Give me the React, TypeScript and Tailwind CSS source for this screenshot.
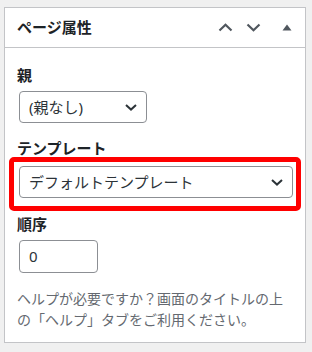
import React from "react";

const font = { fontFamily: '"Noto Sans", "Noto Sans CJK JP", sans-serif' };

function Chevron({ className = "" }: { className?: string }) {
  return (
    <svg width="12" height="7" viewBox="0 0 12 7" className={className}>
      <path d="M1 1 L6 5.6 L11 1" fill="none" stroke="#2c3338" strokeWidth="2" />
    </svg>
  );
}

function Select({ value, width }: { value: string; width: string }) {
  return (
    <div
      className={`${width} ml-[2px] flex h-[32px] items-center justify-between rounded-[4px] border border-[#8c8f94] bg-white pl-[9px] pr-[9px] text-[15px] text-[#2c3338]`}
    >
      <span className="leading-none">{value}</span>
      <Chevron />
    </div>
  );
}

export default function App() {
  return (
    <div className="h-[352px] w-[312px] bg-[#f0f0f0] pl-[4px] pt-[7px]" style={font}>
      <div className="w-[302px] border border-[#c3c4c7] bg-white">
        {/* header */}
        <div className="flex h-[40px] items-center border-b border-[#c3c4c7] pl-[12px]">
          <h2 className="text-[15px] font-bold text-[#1d2327]">ページ属性</h2>
          <div className="ml-auto flex h-full items-center">
            <div className="flex w-[28px] justify-center">
              <svg width="15" height="9" viewBox="0 0 15 9">
                <path d="M1.5 7.5 L7.5 1.8 L13.5 7.5" fill="none" stroke="#50575e" strokeWidth="2.2" />
              </svg>
            </div>
            <div className="flex w-[29px] justify-center">
              <svg width="15" height="9" viewBox="0 0 15 9">
                <path d="M1.5 1.5 L7.5 7.2 L13.5 1.5" fill="none" stroke="#50575e" strokeWidth="2.2" />
              </svg>
            </div>
            <div className="flex w-[37px] justify-center">
              <svg width="10" height="7" viewBox="0 0 10 7">
                <path d="M5 0.5 L9.5 6.5 L0.5 6.5 Z" fill="#50575e" />
              </svg>
            </div>
          </div>
        </div>

        {/* body */}
        <div className="px-[12px] pb-[12px] pt-[17px]">
          <p className="text-[15px] font-semibold leading-[20px] text-[#1d2327]">親</p>
          <div className="mt-[6px]">
            <Select value="(親なし)" width="w-[128px]" />
          </div>

          <p className="mt-[15px] text-[15px] font-semibold leading-[20px] text-[#1d2327]">テンプレート</p>
          <div className="relative mt-[8px]">
            <Select value="デフォルトテンプレート" width="w-[274px]" />
            <div className="pointer-events-none absolute left-[-8px] top-[-9px] h-[54px] w-[292px] rounded-[5px] border-[5px] border-[#ff0000]" />
          </div>

          <p className="mt-[16px] text-[15px] font-semibold leading-[20px] text-[#1d2327]">順序</p>
          <div className="ml-[2px] mt-[6px] flex h-[33px] w-[79px] items-center rounded-[4px] border border-[#8c8f94] pl-[9px] text-[15px] text-[#2c3338]">
            0
          </div>

          <p className="mt-[15px] text-[14px] leading-[21px] text-[#646970]">
            ヘルプが必要ですか？画面のタイトルの上の「ヘルプ」タブをご利用ください。
          </p>
        </div>
      </div>
    </div>
  );
}
